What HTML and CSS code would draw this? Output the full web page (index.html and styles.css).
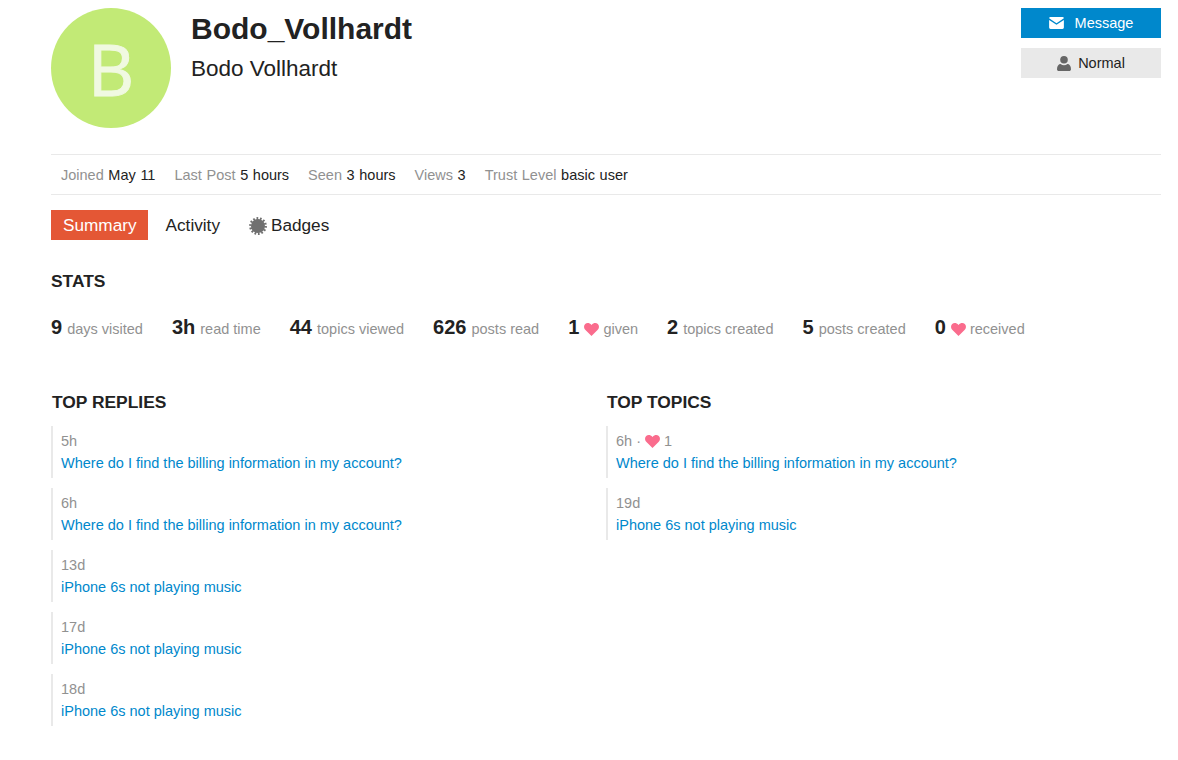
FILE: index.html
```html
<!DOCTYPE html>
<html lang="en">
<head>
  <meta charset="UTF-8">
  <meta name="viewport" content="width=device-width, initial-scale=1.0">
  <title>Bodo_Vollhardt - Profile</title>
  <link rel="stylesheet" href="styles.css">
</head>
<body>
  <main class="wrap">
    <header class="profile">
      <div class="avatar">B</div>
      <div class="names">
        <h1>Bodo_Vollhardt</h1>
        <h2>Bodo Vollhardt</h2>
      </div>
      <div class="actions">
        <button class="btn btn-primary">
          <svg class="icon-mail" viewBox="0 0 16 13"><path d="M1.500 0h13A1.500 1.500 0 0 1 16 1.400L8 6.700 0 1.400A1.500 1.500 0 0 1 1.500 0z"/><path d="M0 3.200V11.500A1.500 1.500 0 0 0 1.500 13h13a1.500 1.500 0 0 0 1.500-1.500V3.200L8 8.500z"/></svg>
          Message
        </button>
        <button class="btn btn-muted">
          <svg class="icon-user" viewBox="0 0 14 15"><circle cx="7" cy="3.800" r="3.800"/><path d="M0 13.200C0 10 1.600 8 3.600 8c1 .8 2.100 1.200 3.400 1.200S9.400 8.800 10.400 8C12.400 8 14 10 14 13.200 14 14.300 13.200 15 12.200 15H1.800C.8 15 0 14.300 0 13.200z"/></svg>
          Normal
        </button>
      </div>
    </header>

    <ul class="meta">
      <li>Joined <b>May 11</b></li>
      <li>Last Post <b>5 hours</b></li>
      <li>Seen <b>3 hours</b></li>
      <li>Views <b>3</b></li>
      <li>Trust Level <b>basic user</b></li>
    </ul>

    <nav class="tabs">
      <a class="tab active" href="#">Summary</a>
      <a class="tab" href="#">Activity</a>
      <a class="tab" href="#">
        <svg class="icon-badge" viewBox="0 0 18 18"><circle class="badge-teeth" cx="9" cy="9" r="7.600"/><circle cx="9" cy="9" r="7"/></svg>
        Badges
      </a>
    </nav>

    <section class="stats">
      <h3>STATS</h3>
      <ul class="stat-list">
        <li><b>9</b> days visited</li>
        <li><b>3h</b> read time</li>
        <li><b>44</b> topics viewed</li>
        <li><b>626</b> posts read</li>
        <li><b>1</b> <svg class="heart" viewBox="0 0 16 14"><path d="M8 14L1.500 7.600C-.5 5.600-.5 2.800 1.200 1.200 3 -.5 5.800-.3 8 2.200 10.200-.3 13-.5 14.800 1.200c1.700 1.600 1.700 4.400-.3 6.400z"/></svg> given</li>
        <li><b>2</b> topics created</li>
        <li><b>5</b> posts created</li>
        <li><b>0</b> <svg class="heart" viewBox="0 0 16 14"><path d="M8 14L1.500 7.600C-.5 5.600-.5 2.800 1.200 1.200 3 -.5 5.800-.3 8 2.200 10.200-.3 13-.5 14.800 1.200c1.700 1.600 1.700 4.400-.3 6.400z"/></svg> received</li>
      </ul>
    </section>

    <div class="columns">
      <section>
        <h3>TOP REPLIES</h3>
        <ul class="posts">
          <li><span class="when">5h</span><a href="#">Where do I find the billing information in my account?</a></li>
          <li><span class="when">6h</span><a href="#">Where do I find the billing information in my account?</a></li>
          <li><span class="when">13d</span><a href="#">iPhone 6s not playing music</a></li>
          <li><span class="when">17d</span><a href="#">iPhone 6s not playing music</a></li>
          <li><span class="when">18d</span><a href="#">iPhone 6s not playing music</a></li>
        </ul>
      </section>
      <section>
        <h3>TOP TOPICS</h3>
        <ul class="posts">
          <li><span class="when">6h · <svg class="heart" viewBox="0 0 16 14"><path d="M8 14L1.500 7.600C-.5 5.600-.5 2.800 1.200 1.200 3 -.5 5.800-.3 8 2.200 10.200-.3 13-.5 14.800 1.200c1.700 1.600 1.700 4.400-.3 6.400z"/></svg> 1</span><a href="#">Where do I find the billing information in my account?</a></li>
          <li><span class="when">19d</span><a href="#">iPhone 6s not playing music</a></li>
        </ul>
      </section>
    </div>
  </main>
</body>
</html>
```

FILE: styles.css
```css
:root {
  --text: #222;
  --muted: #919191;
  --line: #e9e9e9;
  --blue: #0088cc;
  --pink: #fa6c8d;
}

body {
  font-family: "Liberation Sans", Arial, sans-serif;
  font-size: 14.5px;
  color: var(--text);
  background-color: #fff;
  margin: 0;
  padding: 0;
}

ul {
  list-style: none;
  margin: 0;
  padding: 0;
}

.wrap {
  width: 1110px;
  margin-left: 51px;
  padding-top: 8px;
}

.profile {
  display: flex;
  height: 146px;
}

.avatar {
  width: 120px;
  height: 120px;
  border-radius: 50%;
  background-color: #c2ea76;
  color: #f0f9e1;
  font-family: "Open Sans", sans-serif;
  font-size: 72px;
  line-height: 120px;
  text-align: center;
  -webkit-text-stroke: 1px #f0f9e1;
}

.names {
  flex: 1;
  margin-left: 20px;
}

.names h1 {
  font-size: 30px;
  line-height: 42px;
  margin: 0;
}

.names h2 {
  font-size: 22.500px;
  font-weight: 400;
  line-height: 30px;
  margin: 4px 0 0;
}

.actions {
  width: 140px;
  display: flex;
  flex-direction: column;
  gap: 10px;
}

.btn {
  height: 30px;
  display: flex;
  align-items: center;
  justify-content: center;
  border: none;
  font-family: inherit;
  font-size: 14.5px;
  padding: 0;
}

.btn-primary {
  background-color: var(--blue);
  color: #fff;
  gap: 11px;
}

.btn-muted {
  background-color: #e9e9e9;
  color: var(--text);
  gap: 7px;
}

.icon-mail {
  width: 15px;
  height: 12px;
  fill: #fff;
}

.icon-user {
  width: 14px;
  height: 15px;
  fill: #666;
}

.meta {
  display: flex;
  gap: 19px;
  height: 39px;
  align-items: center;
  padding-left: 10px;
  border-top: 1px solid var(--line);
  border-bottom: 1px solid var(--line);
  color: var(--muted);
  word-spacing: .6px;
}

.meta b {
  font-weight: 400;
  color: var(--text);
}

.tabs {
  display: flex;
  align-items: center;
  margin-top: 15px;
  font-size: 17.200px;
}

.tab {
  display: flex;
  align-items: center;
  gap: 4px;
  height: 30px;
  padding: 1px 12px 0;
  margin-right: 5px;
  box-sizing: border-box;
  color: var(--text);
  text-decoration: none;
}

.tab.active {
  padding-right: 11px;
  margin-right: 6px;
  background-color: #e45735;
  color: #fff;
}

.icon-badge {
  width: 18px;
  height: 18px;
  fill: #707070;
}

.badge-teeth {
  fill: none;
  stroke: #707070;
  stroke-width: 2.600;
  stroke-dasharray: 1.700 1.710;
}

h3 {
  font-size: 17.400px;
  line-height: 20px;
  margin: 0;
}

.stats {
  margin-top: 31px;
}

.stat-list {
  display: flex;
  gap: 29px;
  margin-top: 23px;
  color: var(--muted);
  line-height: 26px;
}

.stat-list b {
  font-size: 20px;
  color: var(--text);
  margin-right: 1px;
}

.heart {
  width: 15px;
  height: 13px;
  fill: var(--pink);
  vertical-align: -2px;
}

.columns {
  display: grid;
  grid-template-columns: 1fr 1fr;
  margin-top: 50px;
}

.columns h3 {
  margin-bottom: 14px;
  padding-left: 1px;
}

.posts li {
  height: 52px;
  margin-bottom: 10px;
  padding-left: 8px;
  border-left: 2px solid var(--line);
  box-sizing: border-box;
}

.when {
  display: block;
  color: var(--muted);
  line-height: 20px;
  padding-top: 5px;
}

.posts a {
  display: block;
  color: var(--blue);
  text-decoration: none;
  line-height: 20px;
  padding-top: 2px;
}
```
